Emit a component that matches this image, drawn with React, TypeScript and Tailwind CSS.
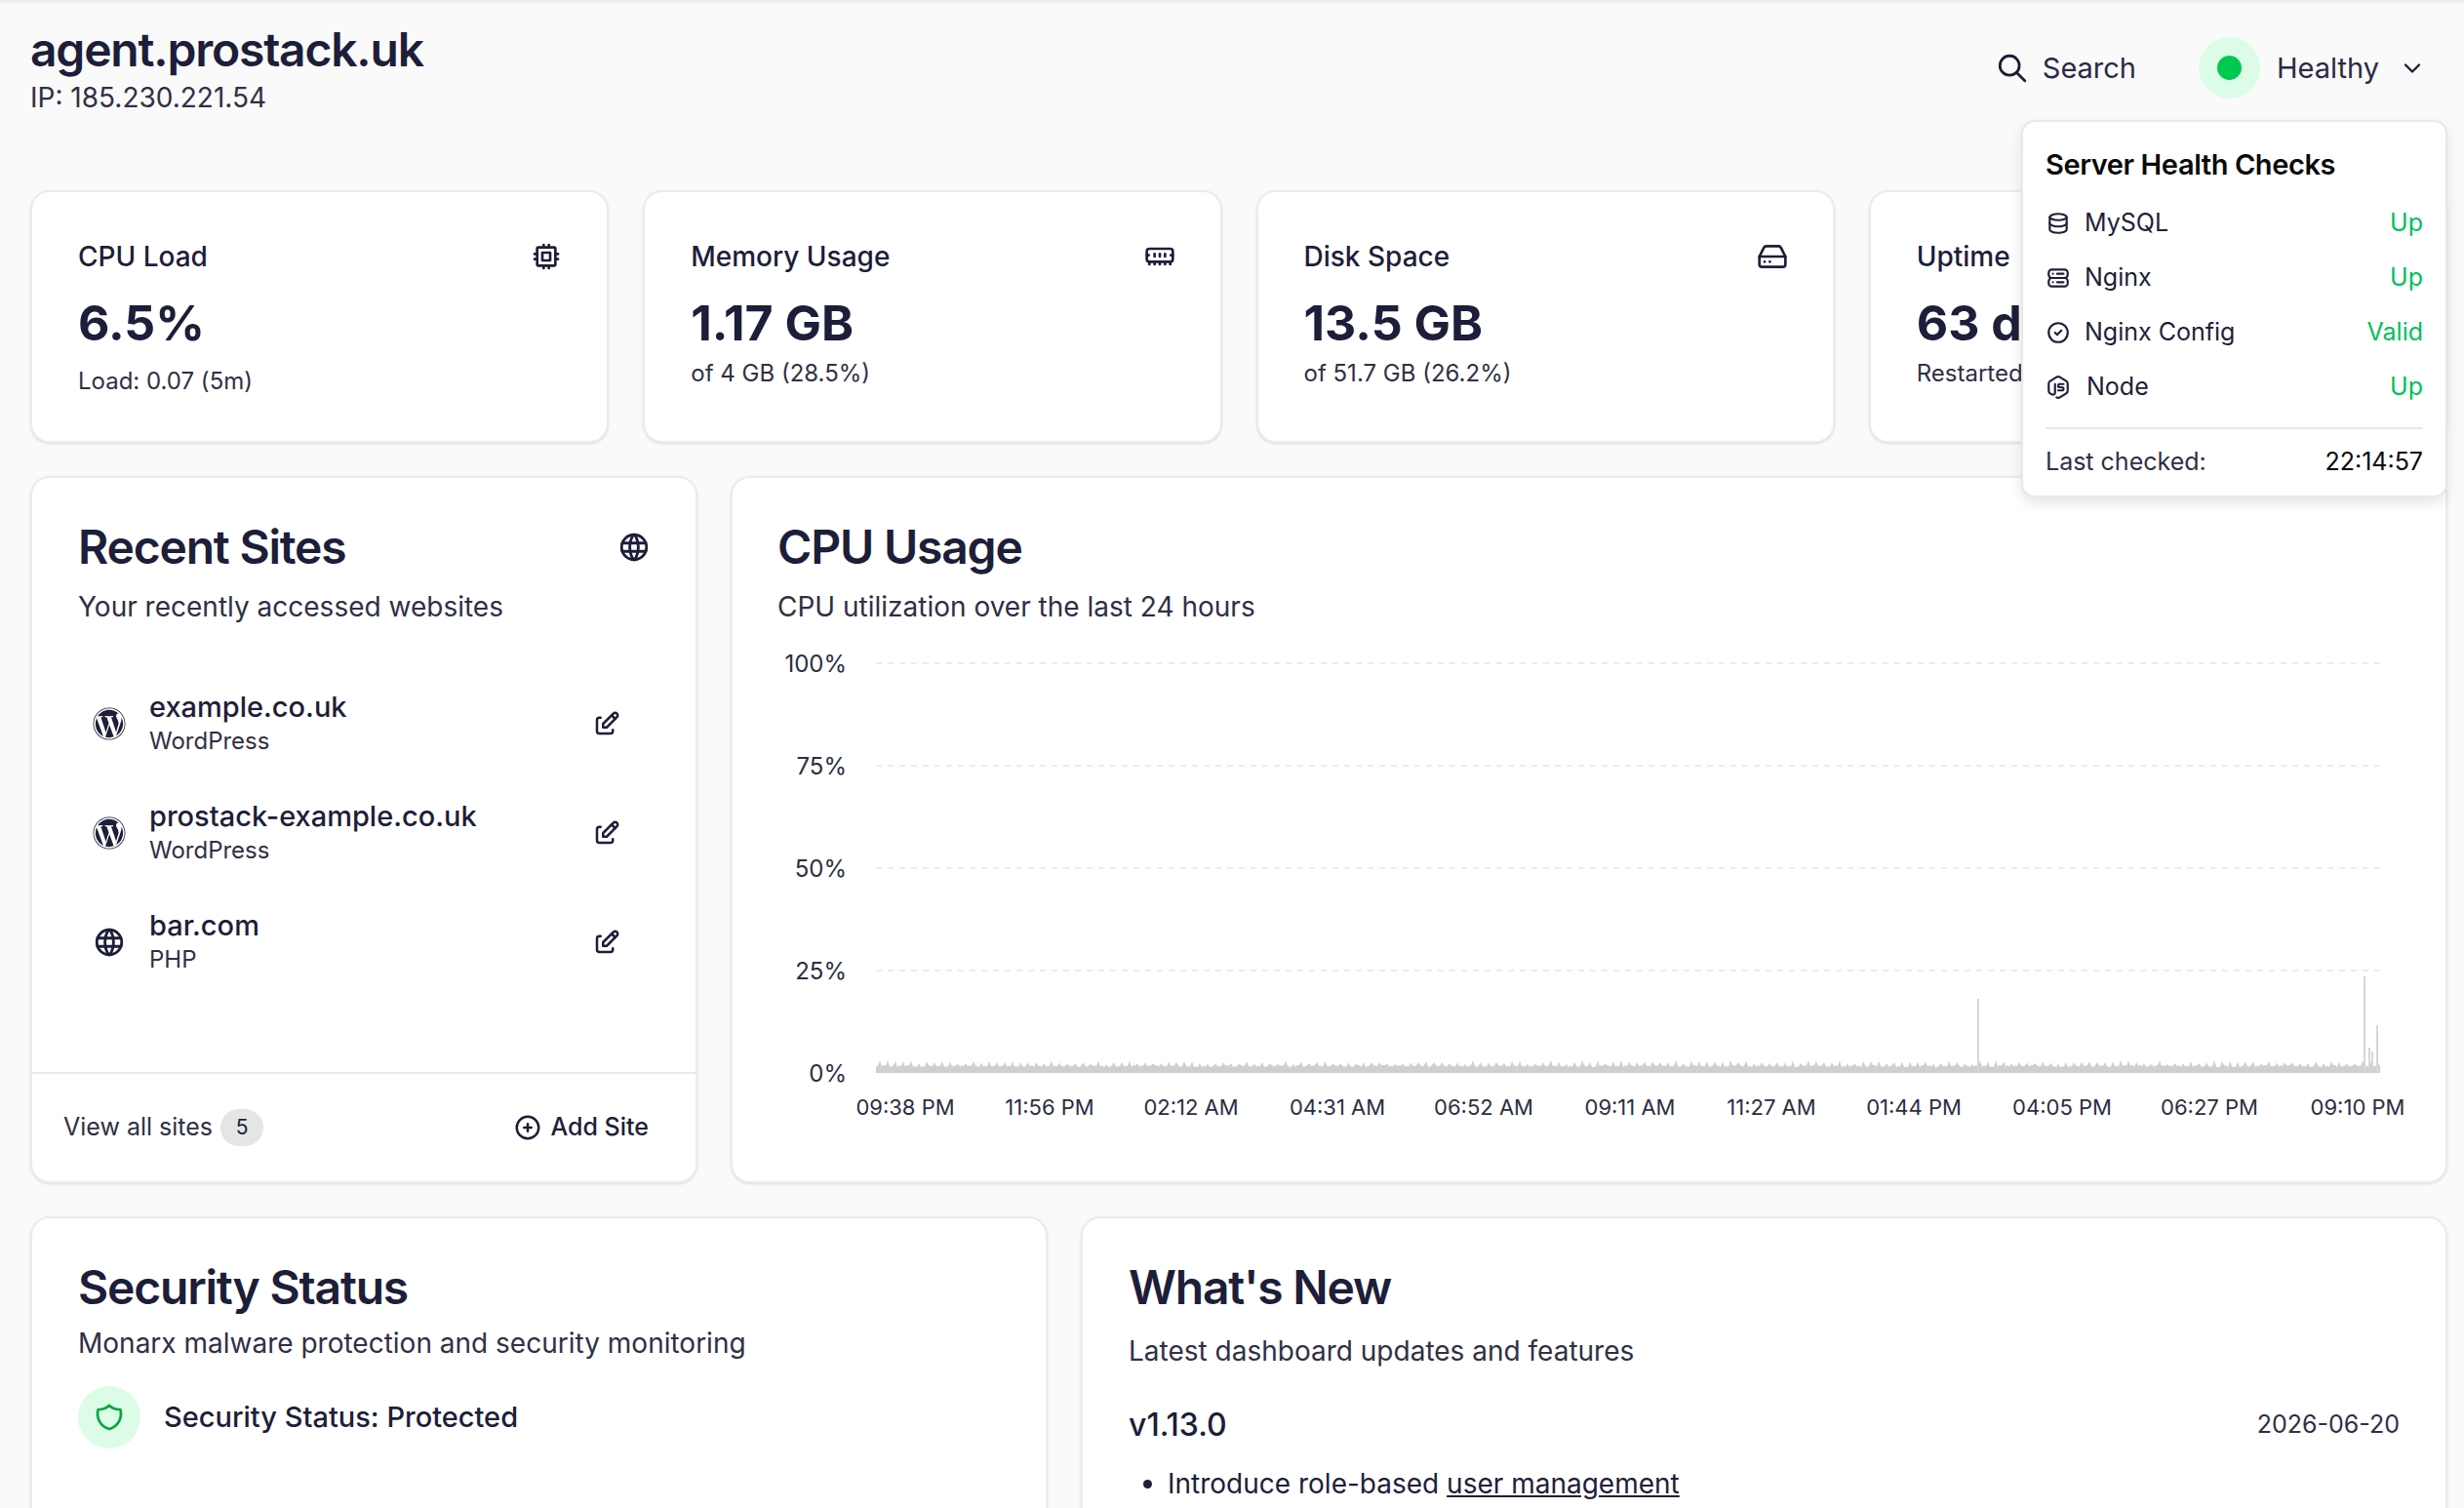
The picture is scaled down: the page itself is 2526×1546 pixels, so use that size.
import React from "react";
import { HardDrive, MemoryStick } from "lucide-react";
import { FaWordpress } from "react-icons/fa";
import {
  TbBrandNodejs,
  TbChevronDown,
  TbCircleCheck,
  TbCirclePlus,
  TbCpu,
  TbDatabase,
  TbEdit,
  TbSearch,
  TbServer2,
  TbShield,
  TbWorld,
} from "react-icons/tb";

const stats = [
  { label: "CPU Load", value: "6.5%", sub: "Load: 0.07 (5m)", icon: TbCpu, subClass: "mt-[14px]" },
  { label: "Memory Usage", value: "1.17 GB", sub: "of 4 GB (28.5%)", icon: MemoryStick, subClass: "mt-[6px]" },
  { label: "Disk Space", value: "13.5 GB", sub: "of 51.7 GB (26.2%)", icon: HardDrive, subClass: "mt-[6px]" },
  { label: "Uptime", value: "63 days", sub: "Restarted 2026-04-18", icon: TbCpu, subClass: "mt-[6px]" },
];

const sites = [
  { name: "example.co.uk", type: "WordPress", icon: FaWordpress },
  { name: "prostack-example.co.uk", type: "WordPress", icon: FaWordpress },
  { name: "bar.com", type: "PHP", icon: TbWorld },
];

const checks = [
  { name: "MySQL", status: "Up", icon: TbDatabase, gap: "gap-[14px]" },
  { name: "Nginx", status: "Up", icon: TbServer2, gap: "gap-[14px]" },
  { name: "Nginx Config", status: "Valid", icon: TbCircleCheck, gap: "gap-[14px]" },
  { name: "Node", status: "Up", icon: TbBrandNodejs, gap: "gap-[16px]" },
];

const yTicks = [
  { label: "100%", y: 24 },
  { label: "75%", y: 129 },
  { label: "50%", y: 234 },
  { label: "25%", y: 339 },
  { label: "0%", y: 444 },
];

const xTicks = [
  { label: "09:38 PM", x: 131 },
  { label: "11:56 PM", x: 279 },
  { label: "02:12 AM", x: 424 },
  { label: "04:31 AM", x: 574 },
  { label: "06:52 AM", x: 724 },
  { label: "09:11 AM", x: 874 },
  { label: "11:27 AM", x: 1019 },
  { label: "01:44 PM", x: 1165 },
  { label: "04:05 PM", x: 1317 },
  { label: "06:27 PM", x: 1468 },
  { label: "09:10 PM", x: 1620 },
];

// noisy low-level cpu band, same shape on every render
function bandPath() {
  const base = 444;
  let d = `M101 ${base}`;
  for (let x = 101; x <= 1643; x += 2) {
    const n = Math.abs(Math.sin(x * 12.9898) * 43758.5453) % 1;
    const h = x % 8 === 1 ? 9 + n * 4 : 6 + n * 2;
    d += ` L${x} ${(base - h).toFixed(1)}`;
  }
  return `${d} L1643 ${base} Z`;
}

const spikes = [
  { x: 1231, top: 368 },
  { x: 1627, top: 345 },
  { x: 1632, top: 418 },
  { x: 1635, top: 422 },
  { x: 1640, top: 395 },
];

function CpuChart() {
  return (
    <svg width="1662" height="510" className="mt-[14px] overflow-visible font-['Inter',sans-serif]">
      {yTicks.map((t) => (
        <g key={t.label}>
          {t.y !== 444 && (
            <line x1="101" x2="1643" y1={t.y} y2={t.y} stroke="#ececec" strokeWidth="2" strokeDasharray="6 6" />
          )}
          <text x="71" y={t.y + 9} textAnchor="end" fontSize="24" fill="#2c2d44">
            {t.label}
          </text>
        </g>
      ))}
      <path d={bandPath()} fill="#cfcfd2" />
      {spikes.map((s) => (
        <line key={s.x} x1={s.x} x2={s.x} y1={s.top} y2="444" stroke="#d6d6d8" strokeWidth="2" />
      ))}
      {xTicks.map((t) => (
        <text key={t.label} x={t.x} y="487" textAnchor="middle" fontSize="22" fill="#2c2d44">
          {t.label}
        </text>
      ))}
    </svg>
  );
}

function HealthPopover() {
  return (
    <div className="absolute right-0 top-[123px] z-10 w-[437px] h-[387px] rounded-[14px] border-2 border-[#e8e8e8] bg-white px-[23px] pt-[24px] text-[#0a0a0a] shadow-[0_6px_14px_rgba(0,0,0,0.1)]">
      <h3 className="text-[29px] leading-[40px] font-semibold tracking-[-0.4px]">Server Health Checks</h3>
      <ul className="mt-[12px] flex flex-col">
        {checks.map((c) => (
          <li key={c.name} className="flex h-[56px] items-center justify-between text-[25px]">
            <span className={`flex items-center ${c.gap} text-[#1e1f38]`}>
              <c.icon className="size-[26px]" />
              {c.name}
            </span>
            <span className="text-[#00c058]">{c.status}</span>
          </li>
        ))}
      </ul>
      <div className="mt-[13px] flex items-center justify-between border-t-2 border-[#e8e8e8] pt-[16px] text-[25px] leading-[34px]">
        <span className="text-[#2f3045]">Last checked:</span>
        <span className="text-[#0a0a0a]">22:14:57</span>
      </div>
    </div>
  );
}

export default function App() {
  return (
    <div className="relative h-[1546px] w-[2526px] overflow-hidden bg-[#fafafa] pl-[31px] pr-[17px] font-['Inter',sans-serif] text-[#1d1e39] shadow-[inset_0_5px_5px_-3px_rgba(0,0,0,0.08)]">
      <header className="relative flex h-[195px] items-start justify-between">
        <div className="pt-[22px]">
          <h1 className="text-[48px] leading-[58px] font-semibold tracking-[-1.2px]">agent.prostack.uk</h1>
          <p className="text-[28px] leading-[40px] text-[#2f3045]">IP: 185.230.221.54</p>
        </div>
        <div className="absolute right-[22px] top-[38px] flex h-[63px] items-center">
          <TbSearch className="size-[34px]" />
          <span className="ml-[14px] text-[29px] text-[#2a2b44]">Search</span>
          <span className="ml-[64px] flex size-[63px] items-center justify-center rounded-full bg-[#dcfce7]">
            <span className="size-[25px] rounded-full bg-[#00c950]" />
          </span>
          <span className="ml-[17px] text-[29px] text-[#2a2b44]">Healthy</span>
          <TbChevronDown className="ml-[20px] size-[28px]" />
        </div>
        <HealthPopover />
      </header>

      <section className="grid grid-cols-4 gap-x-[35px]">
        {stats.map((s) => (
          <div key={s.label} className="h-[259px] rounded-[20px] border-2 border-[#ececec] bg-white pl-[47px] pr-[46px] pt-[46px] shadow-sm">
            <div className="flex items-center justify-between">
              <span className="text-[28px] leading-[40px] font-medium">{s.label}</span>
              <s.icon className="size-[32px]" strokeWidth={2} />
            </div>
            <div className="mt-[18px] text-[50px] leading-[60px] font-bold">{s.value}</div>
            <div className={`${s.subClass} text-[24px] leading-[32px] text-[#2f3045]`}>{s.sub}</div>
          </div>
        ))}
      </section>

      <section className="mt-[34px] grid h-[725px] grid-cols-[684px_1fr] gap-x-[34px]">
        <div className="flex flex-col rounded-[20px] border-2 border-[#ececec] bg-white shadow-sm">
          <div className="flex-1 pl-[47px] pr-[46px] pt-[42px]">
            <div className="flex items-center justify-between">
              <h2 className="text-[48px] leading-[58px] font-semibold tracking-[-1.2px]">Recent Sites</h2>
              <TbWorld className="size-[34px]" />
            </div>
            <p className="mt-[12px] text-[28px] leading-[40px] text-[#2f3045]">Your recently accessed websites</p>
            <ul className="mt-[44px] flex flex-col">
              {sites.map((site) => (
                <li key={site.name} className="flex h-[112px] items-center justify-between pl-[15px] pr-[30px]">
                  <div className="flex items-center gap-[24px]">
                    <site.icon className="size-[34px]" />
                    <div>
                      <div className="text-[29px] leading-[36px] font-medium">{site.name}</div>
                      <div className="text-[24px] leading-[34px] text-[#2f3045]">{site.type}</div>
                    </div>
                  </div>
                  <TbEdit className="size-[30px]" />
                </li>
              ))}
            </ul>
          </div>
          <div className="flex h-[112px] items-center justify-between border-t-2 border-[#e8e8e8] pl-[32px] pr-[48px]">
            <div className="flex items-center gap-[8px]">
              <span className="text-[25px] text-[#2f3045]">View all sites</span>
              <span className="flex h-[38px] w-[44px] items-center justify-center rounded-full bg-[#e5e5e5] text-[21px]">5</span>
            </div>
            <div className="flex items-center gap-[8px]">
              <TbCirclePlus className="size-[30px]" />
              <span className="text-[25px] font-medium">Add Site</span>
            </div>
          </div>
        </div>

        <div className="rounded-[20px] border-2 border-[#ececec] bg-white pl-[46px] pt-[42px] shadow-sm">
          <h2 className="text-[48px] leading-[58px] font-semibold tracking-[-1.2px]">CPU Usage</h2>
          <p className="mt-[12px] text-[28px] leading-[40px] text-[#2f3045]">CPU utilization over the last 24 hours</p>
          <CpuChart />
        </div>
      </section>

      <section className="mt-[34px] grid h-[500px] grid-cols-[1043px_1fr] gap-x-[34px]">
        <div className="rounded-[20px] border-2 border-[#ececec] bg-white pl-[47px] pt-[42px] shadow-sm">
          <h2 className="text-[48px] leading-[58px] font-semibold tracking-[-1.2px]">Security Status</h2>
          <p className="mt-[8px] text-[28px] leading-[40px] text-[#2f3045]">Monarx malware protection and security monitoring</p>
          <div className="mt-[24px] flex items-center gap-[24px]">
            <span className="flex size-[64px] items-center justify-center rounded-full bg-[#dcfce7]">
              <TbShield className="size-[32px] text-[#00a63e]" />
            </span>
            <span className="text-[29px] font-medium">Security Status: Protected</span>
          </div>
        </div>

        <div className="rounded-[20px] border-2 border-[#ececec] bg-white pl-[47px] pr-[47px] pt-[42px] shadow-sm">
          <h2 className="text-[48px] leading-[58px] font-semibold tracking-[-1.2px]">What's New</h2>
          <p className="mt-[16px] text-[28px] leading-[40px] text-[#2f3045]">Latest dashboard updates and features</p>
          <div className="mt-[34px] flex items-center justify-between">
            <span className="text-[32px] leading-[44px] font-medium">v1.13.0</span>
            <span className="text-[25px] text-[#2f3045]">2026-06-20</span>
          </div>
          <ul className="mt-[18px] list-disc pl-[40px] text-[28px] leading-[40px]">
            <li>
              Introduce role-based <span className="underline">user management</span>
            </li>
          </ul>
        </div>
      </section>
    </div>
  );
}
